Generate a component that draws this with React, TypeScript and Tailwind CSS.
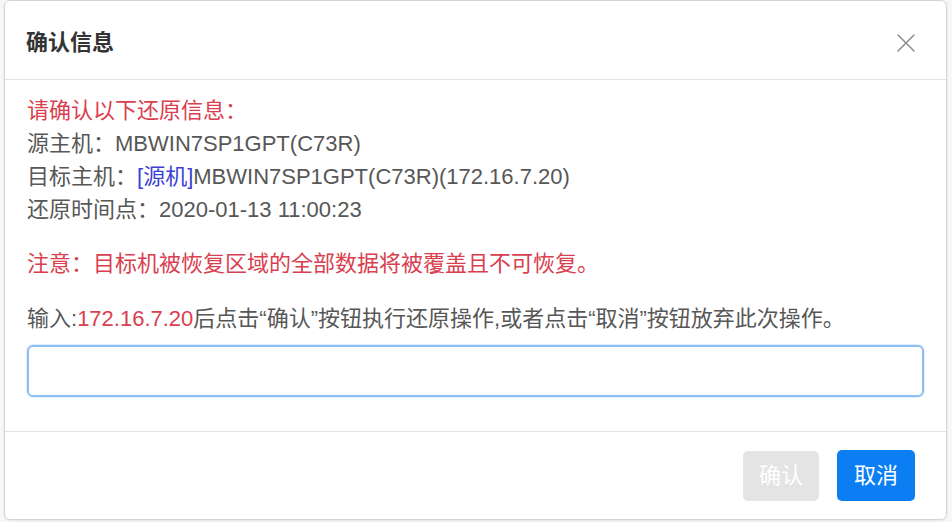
import { useState } from "react";

const font = { fontFamily: '"Liberation Sans", "Noto Sans CJK SC", sans-serif' };

function CloseIcon() {
  return (
    <svg width="20" height="20" viewBox="0 0 20 20" className="text-[#8a8a8a]">
      <path d="M2 2 L18 18 M18 2 L2 18" stroke="currentColor" strokeWidth="1.5" strokeLinecap="round" />
    </svg>
  );
}

export default function App() {
  const [value, setValue] = useState("");
  const target = "172.16.7.20";

  return (
    <div className="h-[522px] w-[952px] bg-[#f7f7f7] pl-[4px]" style={font}>
      <div className="flex h-[520px] w-[943px] flex-col rounded-[6px] border border-[#d4d4d4] bg-white shadow-[0_1px_3px_rgba(0,0,0,0.08)]">
        {/* header */}
        <div className="flex h-[79px] shrink-0 items-start justify-between border-b border-[#e2e2e2] pl-[21px] pr-[30px] pt-[25px]">
          <h5 className="text-[22px] font-bold leading-[33px] text-[#333]">确认信息</h5>
          <button className="mt-[7px] flex h-[20px] w-[20px] items-center justify-center">
            <CloseIcon />
          </button>
        </div>

        {/* body */}
        <div className="flex-1 px-[22px] pt-[14px] text-[22px] leading-[33px] text-[#575757]">
          <div className="text-[#d9404f]">请确认以下还原信息：</div>
          <div>源主机：MBWIN7SP1GPT(C73R)</div>
          <div>
            目标主机：<span className="text-[#3b3fd6]">[源机]</span>MBWIN7SP1GPT(C73R)(172.16.7.20)
          </div>
          <div>还原时间点：2020-01-13 11:00:23</div>
          <div className="mt-[21px] text-[#d9404f]">注意：目标机被恢复区域的全部数据将被覆盖且不可恢复。</div>
          <div className="mt-[22px]">
            输入:<span className="text-[#d9404f]">{target}</span>后点击“确认”按钮执行还原操作,或者点击“取消”按钮放弃此次操作。
          </div>
          <input
            value={value}
            onChange={(e) => setValue(e.target.value)}
            className="mt-[10px] block h-[52px] w-full rounded-[6px] border-2 border-[#8fbff0] px-3 text-[22px] outline-none shadow-[0_0_0_1px_rgba(0,123,255,0.12)]"
          />
        </div>

        {/* footer */}
        <div className="flex h-[88px] shrink-0 items-center justify-end gap-[18px] border-t border-[#e2e2e2] pr-[31px]">
          <button
            disabled={value !== target}
            className="h-[50px] rounded-[5px] bg-[#e4e4e4] px-[16px] text-[22px] text-white disabled:cursor-not-allowed"
          >
            确认
          </button>
          <button className="h-[51px] rounded-[5px] bg-[#0b7ef3] px-[17px] text-[22px] text-white">取消</button>
        </div>
      </div>
    </div>
  );
}
